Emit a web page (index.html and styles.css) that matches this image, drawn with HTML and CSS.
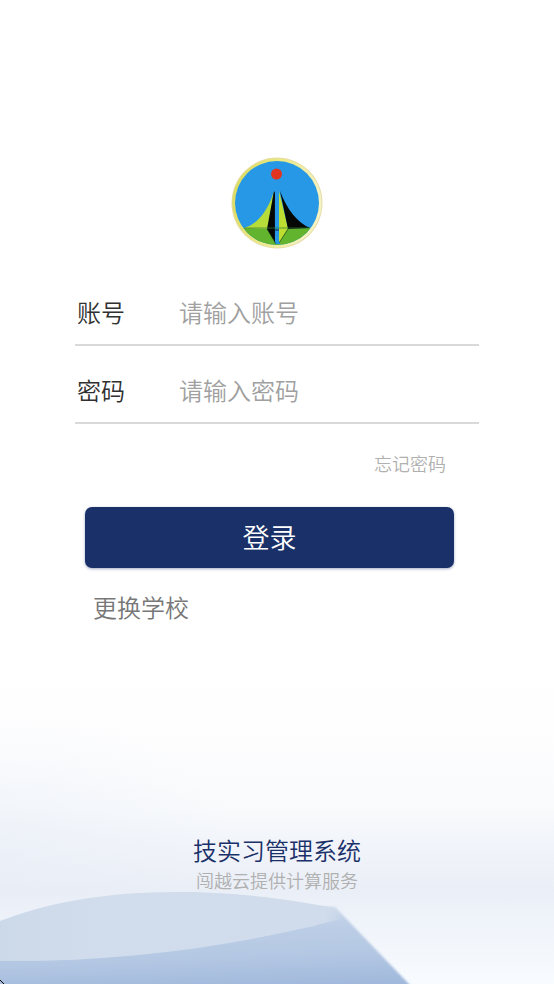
FILE: index.html
```html
<!DOCTYPE html>
<html lang="zh-CN">
<head>
<meta charset="utf-8">
<meta name="viewport" content="width=device-width, initial-scale=1">
<title>登录</title>
<link rel="stylesheet" href="styles.css">
</head>
<body>
<div class="page">
  <svg class="backdrop" viewBox="0 0 554 314" preserveAspectRatio="none" aria-hidden="true">
    <defs>
      <linearGradient id="sky" x1="0" y1="0" x2="0" y2="1">
        <stop offset="0" stop-color="#ffffff"/>
        <stop offset=".25" stop-color="#fdfdfe"/>
        <stop offset=".44" stop-color="#f8fafc"/>
        <stop offset=".56" stop-color="#f1f4fa"/>
        <stop offset=".7" stop-color="#eaeef6"/>
        <stop offset=".8" stop-color="#eff3fa"/>
        <stop offset="1" stop-color="#f8fcff"/>
      </linearGradient>
      <radialGradient id="side" cx="0" cy=".55" r=".42">
        <stop offset="0" stop-color="#e6ecf6" stop-opacity=".45"/>
        <stop offset="1" stop-color="#e8eef8" stop-opacity="0"/>
      </radialGradient>
      <linearGradient id="front" gradientUnits="userSpaceOnUse" x1="225" y1="236" x2="228" y2="320">
        <stop offset="0" stop-color="#cfdbeb"/>
        <stop offset=".25" stop-color="#bdcee6"/>
        <stop offset=".6" stop-color="#b4c8e3"/>
        <stop offset="1" stop-color="#a0b8dc"/>
      </linearGradient>
      <linearGradient id="top" gradientUnits="userSpaceOnUse" x1="0" y1="0" x2="342" y2="0">
        <stop offset="0" stop-color="#ccd9e9"/>
        <stop offset=".3" stop-color="#d1ddec"/>
        <stop offset=".9" stop-color="#d0dceb"/>
        <stop offset=".95" stop-color="#d0dceb"/>
        <stop offset="1" stop-color="#d4dfed" stop-opacity="0"/>
      </linearGradient>
      <filter id="soft" x="-5%" y="-10%" width="110%" height="120%">
        <feGaussianBlur stdDeviation="1"/>
      </filter>
    </defs>
    <rect width="554" height="314" fill="url(#sky)"/>
    <rect width="554" height="314" fill="url(#side)"/>
    <path d="M-10 286 Q150 287 318 246 L325 237 L335 237 L409 314 L424 330 L-10 330Z" fill="url(#front)" filter="url(#soft)"/>
    <path d="M0 251 C70 224 140 222 180 222 C240 222 290 230 324 236 L334 237 L346 249 Q326 252 314 256 C210 280 110 292 0 291Z" fill="url(#top)"/>
  </svg>

  <main class="content">
    <svg class="logo" viewBox="0 0 92 92" role="img" aria-label="校徽">
      <defs>
        <clipPath id="disc"><circle cx="46" cy="46" r="42"/></clipPath>
        <linearGradient id="ring" x1="0" y1="0" x2="1" y2=".3">
          <stop offset="0" stop-color="#d9d958"/>
          <stop offset=".55" stop-color="#ece98a"/>
          <stop offset="1" stop-color="#f4f2c0"/>
        </linearGradient>
      </defs>
      <circle cx="46" cy="46" r="45.500" fill="#e4dba8"/>
      <circle cx="46" cy="46" r="44.700" fill="url(#ring)"/>
      <g clip-path="url(#disc)">
        <rect width="92" height="92" fill="#2698e6"/>
        <rect y="71" width="92" height="21" fill="#62b32d"/>
        <path d="M43 34 C38 51 28 67 13 71 L37 72Z" fill="#b5dc38"/>
        <path d="M43 34 L36 72 L45 87Z" fill="#050805"/>
        <path d="M44 33h5v54h-5z" fill="#2698e6"/>
        <path d="M43 34 L44 36 V86 L43 83Z" fill="#071018"/>
        <path d="M48 34 L57 71 L48 86Z" fill="#bddd30"/>
        <path d="M49 34 C56 53 67 66 79 71 L57 72Z" fill="#050805"/>
        <path d="M36 72 L45 87 M57 72 L48 86" stroke="#173b16" stroke-width=".6"/>
        <path d="M13 71h66" stroke="#327c36" stroke-width=".7"/>
        <path d="M43 73h5" stroke="#082536"/>
      </g>
      <circle cx="45.500" cy="17" r="5.500" fill="#e03420"/>
    </svg>

    <form class="form">
      <div class="field">
        <label class="field-label" for="account">账号</label>
        <input class="field-input" id="account" type="text" placeholder="请输入账号">
      </div>
      <div class="field">
        <label class="field-label" for="password">密码</label>
        <input class="field-input" id="password" type="password" placeholder="请输入密码">
      </div>
      <div class="actions">
        <a class="forgot" href="#">忘记密码</a>
        <button class="submit" type="submit">登录</button>
        <a class="switch" href="#">更换学校</a>
      </div>
    </form>
  </main>

  <footer class="footer">
    <p class="system">技实习管理系统</p>
    <p class="provider">闯越云提供计算服务</p>
  </footer>
  <svg class="corner" viewBox="0 0 4 4" aria-hidden="true"><path d="M0 0h1v1h1v1h1v1h1v1H3v-1H2v-1H1v-1H0z"/></svg>
</div>
</body>
</html>
```
FILE: styles.css
```css
* {
  box-sizing: border-box;
}

body {
  margin: 0;
  background: #fff;
  font-family: "Noto Sans CJK SC", sans-serif;
  font-size: 24px;
  font-weight: 350;
  line-height: 36px;
  color: #303030;
}

a {
  text-decoration: none;
}

.page {
  position: relative;
  isolation: isolate;
  display: flex;
  flex-direction: column;
  min-height: 100vh;
}

.backdrop {
  position: absolute;
  z-index: -1;
  left: 0;
  bottom: 0;
  width: 100%;
  height: 314px;
}

.content {
  display: flex;
  flex-direction: column;
  align-items: center;
  padding: 157px 75px 0;
}

.logo {
  width: 92px;
  height: 92px;
}

.form {
  width: 100%;
  max-width: 480px;
  margin-top: 19px;
}

.field {
  display: flex;
  align-items: center;
  height: 78px;
  padding: 12px 2px 0;
  border-bottom: 2px solid #d9d9d9;
}

.field-label {
  flex: 0 0 102px;
}

.field-input {
  flex: 1;
  min-width: 0;
  height: 36px;
  padding: 0;
  border: 0;
  outline: 0;
  background: transparent;
  font: inherit;
  color: inherit;
}

.field-input::placeholder {
  color: #a0a0a0;
  opacity: 1;
}

.actions {
  display: flex;
  flex-direction: column;
  padding: 21px 25px 0 10px;
}

.forgot {
  align-self: flex-end;
  margin-right: 8px;
  font-size: 18px;
  color: #b0b0b0;
}

.submit {
  height: 61px;
  margin-top: 26px;
  padding: 0 0 2px;
  border: 0;
  border-radius: 7px;
  background: #1a3068;
  box-shadow: 0 1px 3px rgb(26 48 104 / 40%);
  font: inherit;
  font-size: 27px;
  color: #fff;
}

.switch {
  align-self: flex-start;
  margin: 21px 0 0 8px;
  color: #777;
}

.footer {
  margin-top: auto;
  padding: 24px 0 92px;
  text-align: center;
}

.system,
.provider {
  margin: 0;
}

.system {
  color: #1a3068;
}

.provider {
  font-size: 18px;
  line-height: 24px;
  color: #b0b0b0;
}

.corner {
  position: absolute;
  left: 0;
  bottom: 0;
  width: 4px;
  height: 4px;
}
```
